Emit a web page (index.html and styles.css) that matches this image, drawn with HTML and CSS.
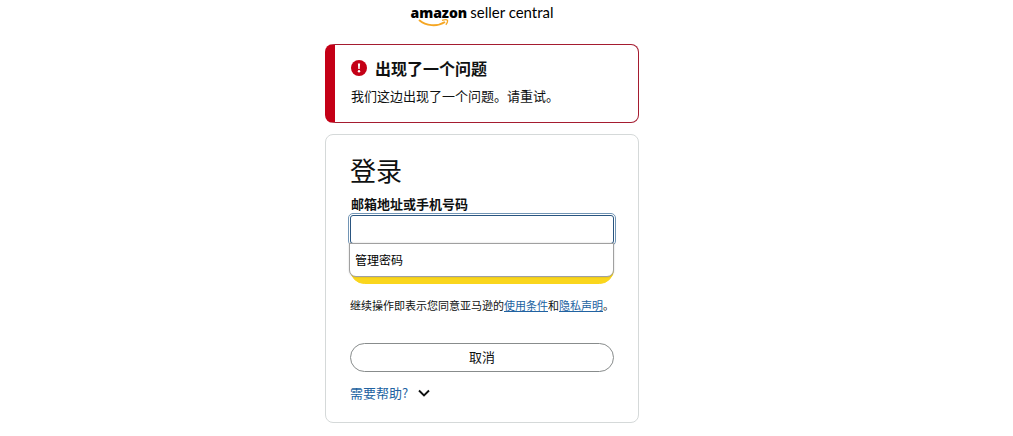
FILE: index.html
```
<!DOCTYPE html>
<html lang="zh-CN">
<head>
    <meta charset="UTF-8">
    <meta name="viewport" content="width=device-width, initial-scale=1.0">
    <title>Amazon Seller Central - 登录</title>
    <link rel="stylesheet" href="styles.css">
</head>
<body>

    <header class="logo">
        <span class="logo-name">amazon
            <svg class="logo-smile" viewBox="0 0 32 8" width="32" height="8" aria-hidden="true">
                <path d="M1 1 C8 7 19 8 27 3" fill="none" stroke="#f5a623" stroke-width="1.900"/>
                <path d="M24 1.400 C27 0.500 29 0.600 29.500 1.300 C29.800 2.500 29 4.500 27.800 5.800" fill="none" stroke="#f5a623" stroke-width="1.300"/>
            </svg>
        </span>
        <span class="logo-product">seller central</span>
    </header>

    <main class="content">
        <section class="alert" role="alert">
            <h2 class="alert-title">
                <svg viewBox="0 0 16 16" width="16" height="16" aria-hidden="true">
                    <circle cx="8" cy="8" r="8" fill="#c40016"/>
                    <path d="M6.900 3.500h2.200l-.4 5.500H7.300z" fill="#fff"/>
                    <circle cx="8" cy="11.300" r="1.200" fill="#fff"/>
                </svg>
                出现了一个问题
            </h2>
            <p>我们这边出现了一个问题。请重试。</p>
        </section>

        <form class="card">
            <h1>登录</h1>
            <label for="email">邮箱地址或手机号码</label>
            <div class="field">
                <input type="text" id="email" name="email" autocomplete="off">
                <!-- Suggestion list under the input -->
                <div class="suggestions">
                    <button type="button" class="suggestion">管理密码</button>
                </div>
            </div>
            <button type="submit" class="btn btn-primary">继续</button>

            <p class="legal">继续操作即表示您同意亚马逊的<a href="#">使用条件</a>和<a href="#">隐私声明</a>。</p>

            <button type="button" class="btn">取消</button>

            <a class="help" href="#">
                需要帮助?
                <svg viewBox="0 0 12 8" width="12" height="8" aria-hidden="true">
                    <path d="M1 1.500l5 5 5-5" fill="none" stroke="#0f1111" stroke-width="1.900"/>
                </svg>
            </a>
        </form>
    </main>

</body>
</html>
```
FILE: styles.css
```
* {
    box-sizing: border-box;
}

body {
    margin: 0;
    padding: 0 49px 12px 0;
    background-color: #fff;
    color: #0f1111;
    font-family: "Noto Sans CJK SC", sans-serif;
    font-size: 13px;
    line-height: 20px;
}

h1,
h2,
p {
    margin: 0;
}

a {
    color: #2162a1;
}

/* Logo */
.logo {
    display: flex;
    justify-content: center;
    align-items: baseline;
    gap: 3px;
    height: 44px;
    padding-top: 2px;
    color: #000;
    font-family: "Open Sans", sans-serif;
    font-size: 14px;
}

.logo-name {
    position: relative;
    font-weight: 800;
}

.logo-smile {
    position: absolute;
    left: 8px;
    top: 16px;
}

.logo-product {
    font-family: Lato, "Open Sans", sans-serif;
    font-size: 15px;
}

.content {
    max-width: 314px;
    margin: 0 auto;
}

/* Error message */
.alert {
    margin-bottom: 11px;
    padding: 13px 16px 16px;
    border: 1px solid #a51c30;
    border-left: 10px solid #c40016;
    border-radius: 8px;
}

.alert-title {
    display: flex;
    align-items: center;
    gap: 8px;
    margin-bottom: 8px;
    font-size: 16px;
}

/* Sign-in card */
.card {
    padding: 15px 24px 19px;
    border: 1px solid #d5d9d9;
    border-radius: 8px;
}

.card h1 {
    margin-bottom: 4px;
    font-size: 26px;
    font-weight: 400;
    line-height: 40px;
}

.card label {
    display: block;
    margin-bottom: 1px;
    padding-left: 1px;
    font-weight: 700;
}

.field {
    position: relative;
    margin-bottom: 11px;
}

.field input {
    display: block;
    width: 100%;
    height: 29px;
    padding: 0 8px;
    border: 1px solid #2a5580;
    border-radius: 3px;
    outline: 1px solid #7295b5;
    outline-offset: 1px;
    font: inherit;
}

.suggestions {
    position: absolute;
    top: 28px;
    left: -1px;
    right: 0;
    padding: 6px 5px;
    background-color: #fff;
    border: 1px solid #a0a0a0;
    border-radius: 0 0 7px 7px;
    box-shadow: 0 0 2px rgba(0, 0, 0, 0.2);
}

.suggestion {
    display: block;
    width: 100%;
    padding: 0;
    background: none;
    border: none;
    color: #000;
    font: inherit;
    font-size: 12px;
    line-height: 20px;
    text-align: left;
}

.btn {
    display: block;
    width: 100%;
    height: 29px;
    padding: 0 0 2px;
    background-color: #fff;
    border: 1px solid #888c8c;
    border-radius: 15px;
    color: #0f1111;
    font: inherit;
    cursor: pointer;
}

.btn-primary {
    background-color: #fad61d;
    border-color: #fad61d;
}

.legal {
    margin: 11px 0 28px;
    font-size: 11px;
}

.help {
    display: flex;
    align-items: center;
    gap: 10px;
    margin-top: 11px;
    text-decoration: none;
}
```
